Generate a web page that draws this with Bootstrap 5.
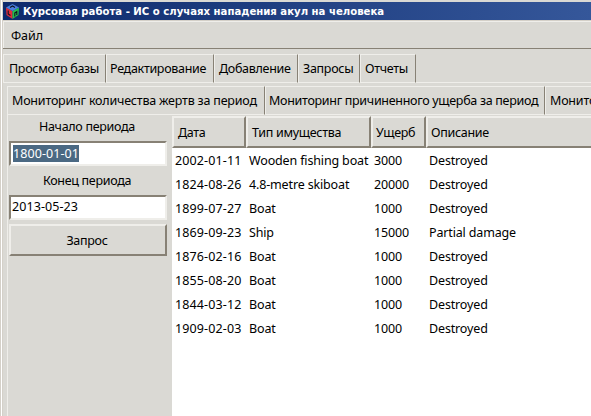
<!DOCTYPE html>
<html lang="ru">
<head>
<meta charset="utf-8">
<title>Курсовая работа</title>
<link href="https://cdn.jsdelivr.net/npm/bootstrap@5.3.0/dist/css/bootstrap.min.css" rel="stylesheet">
<style>
:root{--face:#dad9d4;--hi:#efeeea;--lo:#878175}
body{width:591px;height:416px;overflow:hidden;background:var(--face);color:#000;font:12.5px/16px "Noto Sans","Open Sans",sans-serif;white-space:nowrap;letter-spacing:-.3px}
.window{height:416px;border-left:1px solid #d4d0c8;padding-top:2px;background:linear-gradient(90deg,#fff 1px,#d4d0c8 1px,#d4d0c8 2px,var(--face) 2px)}
.titlebar{height:18px;margin-left:2px;padding-left:3px;background:linear-gradient(90deg,#0d2a6c,#35579a);color:#fff;font:bold 11.25px/18px "DejaVu Sans Condensed","DejaVu Sans",sans-serif;letter-spacing:0}
.titlebar span{margin-left:4px;padding-top:1px}
.menubar{height:29px;margin-left:2px;border-top:1px solid #d4d0c8;border-bottom:1px solid var(--lo);box-shadow:inset 1px 1px var(--hi);padding:7px 0 0 8px;letter-spacing:-.1px}
.tabs-main{margin:5px 0 0 2px;height:29px}
.tabs-sub{margin:3px 0 0 6px;height:29px;letter-spacing:-.2px}
.tab-item{flex:none;border-top:1px solid var(--hi);border-right:1px solid var(--lo);border-bottom:1px solid var(--hi);border-left:1px solid var(--hi);padding:6px 0 0 5px}
.tabs-main .tab-item+.tab-item{padding-left:3px}
.tabs-main .tab-item+.t3,.tabs-main .tab-item+.t4,.tabs-main .tab-item+.t5{padding-left:4px}
.tab-fill{border-bottom:1px solid var(--hi)}
.t1{width:103px}.t2{width:108px}.t3{width:84px}.t4{width:62px}.t5{width:56px}
.s1{width:258px;padding-left:4px}.s2{width:280px;padding-left:3px;letter-spacing:-.3px}.s3{width:120px;padding-left:4px}
.content-row{margin-left:6px;border-left:1px solid var(--hi);height:303px}
.side{width:164px;padding:4px 5px 0 1px;flex:none}
.side .caption{text-align:center;height:16px;margin-bottom:6px;padding-right:2px}
.side .caption+.field+.caption{margin-top:7px}
.field{height:25px;border:2px solid;border-color:var(--lo) var(--hi) var(--hi) var(--lo);background:#fff;padding:2px 0 0 2px;letter-spacing:.08px}
.field+.caption+.field{padding-left:1px}
.field mark{padding:0;background:#4b6983;color:#fff;display:inline-block;height:17px;line-height:17px}
.btn-query{display:block;width:100%;height:32px;margin-top:4px;border:2px solid;border-color:var(--hi) var(--lo) var(--lo) var(--hi)!important;border-radius:0;background:var(--face);padding:1px 2px 0 0;font:inherit;color:#000;letter-spacing:inherit;line-height:16px}
.grid{flex:1;background:#fff;margin-top:1px;min-width:0;overflow:hidden;letter-spacing:-.15px}
.cells{display:grid;grid-template-columns:74px 125px 55px 200px}
.cells.heads{margin-bottom:1px;letter-spacing:-.3px}
.cells.heads>div{height:32px;background:var(--face);border:2px solid;border-color:var(--hi) var(--lo) var(--lo) var(--hi);padding:7px 0 0 4px}
.cells.heads>div:nth-child(n+3){padding-left:3px}
.cells.rec{height:24px;padding-top:4px}
.cells.rec>div{padding-left:3px}
.cells.rec>div:first-child{letter-spacing:.12px}
</style>
<script src="https://cdn.jsdelivr.net/npm/bootstrap@5.3.0/dist/js/bootstrap.bundle.min.js"></script>
</head>
<body>
<div class="window">
<div class="titlebar d-flex align-items-center">
<svg width="13" height="15" viewBox="0 0 13 15"><path d="M0 3.500L6.500 7v8L.5 11z" fill="#e02c3c"/><path d="M13 3.500L6.500 7v8L12.500 11z" fill="#25bd4e"/><path d="M0 3.500L6.500 0 13 3.500 6.500 7z" fill="#4a7fdc"/><path d="M2.200 6.500v3.500l2.300 1.500M8.800 8.500v4M8.800 9l2-1.500v3.500M4 3.500l2.500-1.500L9 3.500" fill="none" stroke="#10131f" stroke-width="1.100"/></svg>
<span>Курсовая работа - ИС о случаях нападения акул на человека</span></div>
<div class="menubar">Файл</div>
<div class="tabs-main d-flex">
<div class="tab-item t1">Просмотр базы</div><div class="tab-item t2">Редактирование</div><div class="tab-item t3">Добавление</div><div class="tab-item t4">Запросы</div><div class="tab-item t5">Отчеты</div><div class="tab-fill flex-grow-1"></div>
</div>
<div class="tabs-sub d-flex overflow-hidden">
<div class="tab-item s1">Мониторинг количества жертв за период</div><div class="tab-item s2">Мониторинг причиненного ущерба за период</div><div class="tab-item s3">Мониторинг</div>
</div>
<div class="content-row d-flex">
<div class="side">
<div class="caption">Начало периода</div>
<div class="field"><mark>1800-01-01</mark></div>
<div class="caption">Конец периода</div>
<div class="field">2013-05-23</div>
<button class="btn btn-query">Запрос</button>
</div>
<div class="grid">
<div class="cells heads"><div>Дата</div><div>Тип имущества</div><div>Ущерб</div><div>Описание</div></div>
<div class="cells rec"><div>2002-01-11</div><div>Wooden fishing boat</div><div>3000</div><div>Destroyed</div></div>
<div class="cells rec"><div>1824-08-26</div><div>4.8-metre skiboat</div><div>20000</div><div>Destroyed</div></div>
<div class="cells rec"><div>1899-07-27</div><div>Boat</div><div>1000</div><div>Destroyed</div></div>
<div class="cells rec"><div>1869-09-23</div><div>Ship</div><div>15000</div><div>Partial damage</div></div>
<div class="cells rec"><div>1876-02-16</div><div>Boat</div><div>1000</div><div>Destroyed</div></div>
<div class="cells rec"><div>1855-08-20</div><div>Boat</div><div>1000</div><div>Destroyed</div></div>
<div class="cells rec"><div>1844-03-12</div><div>Boat</div><div>1000</div><div>Destroyed</div></div>
<div class="cells rec"><div>1909-02-03</div><div>Boat</div><div>1000</div><div>Destroyed</div></div>
</div>
</div>
</div>
</body>
</html>
